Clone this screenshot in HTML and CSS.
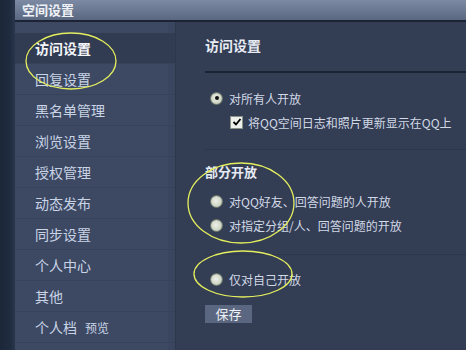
FILE: index.html
```html
<!DOCTYPE html>
<html lang="zh">
<head>
<meta charset="utf-8">
<link rel="stylesheet" href="styles.css">
</head>
<body>
<div class="page">
  <div class="strip"></div>
  <div class="main">
    <div class="titlebar">空间设置</div>
    <div class="body">
      <ul class="sidebar">
        <li class="active">访问设置</li>
        <li>回复设置</li>
        <li>黑名单管理</li>
        <li>浏览设置</li>
        <li>授权管理</li>
        <li>动态发布</li>
        <li>同步设置</li>
        <li>个人中心</li>
        <li>其他</li>
        <li>个人档<span class="sub">预览</span></li>
      </ul>
      <div class="content">
        <div class="head">访问设置</div>
        <div class="section first">
          <label class="opt"><span class="radio checked"></span>对所有人开放</label>
          <label class="opt indent"><span class="check"><svg viewBox="0 0 10 10" width="10" height="10"><path d="M1.5 5 L4 7.5 L8.5 2" fill="none" stroke="#000" stroke-width="1.8"/></svg></span>将QQ空间日志和照片更新显示在QQ上</label>
        </div>
        <div class="section second">
          <div class="subhead">部分开放</div>
          <label class="opt"><span class="radio"></span>对QQ好友、回答问题的人开放</label>
          <label class="opt"><span class="radio"></span>对指定分组/人、回答问题的开放</label>
        </div>
        <div class="section third">
          <label class="opt"><span class="radio"></span>仅对自己开放</label>
          <button class="save">保存</button>
        </div>
      </div>
    </div>
  </div>
  <svg class="marks" width="466" height="350" viewBox="0 0 466 350">
    <ellipse cx="71" cy="61" rx="45" ry="28" fill="none" stroke="#e4ee5e" stroke-width="1.3"/>
    <ellipse cx="241" cy="203" rx="53" ry="40" fill="none" stroke="#e4ee5e" stroke-width="1.3"/>
    <ellipse cx="243" cy="274" rx="49" ry="23" fill="none" stroke="#e4ee5e" stroke-width="1.3"/>
  </svg>
</div>
</body>
</html>
```

FILE: styles.css
```css
html, body {
  margin: 0;
  padding: 0;
  background: #333d54;
}
.page {
  position: relative;
  width: 466px;
  height: 350px;
  overflow: hidden;
  display: flex;
  font-family: "Noto Sans CJK SC", "Liberation Sans", sans-serif;
  font-size: 13px;
}
.strip {
  width: 15px;
  flex: none;
  background: linear-gradient(to right, #1c2739 0, #1f2b3f 10px, #2a364b 15px);
}
.main {
  flex: 1;
  display: flex;
  flex-direction: column;
}
.titlebar {
  height: 20px;
  line-height: 20px;
  padding-left: 7px;
  color: #eef1f6;
  font-weight: bold;
  font-size: 13px;
  background: linear-gradient(to bottom, #7d8aa3 0, #6c7993 10px, #5a6781 20px);
  border-bottom: 2px solid #1b2334;
}
.body {
  flex: 1;
  display: flex;
}
.sidebar {
  list-style: none;
  margin: 0;
  padding: 11px 0 0;
  width: 160px;
  flex: none;
  background: #3d4963;
  border-right: 1px solid #2e384d;
  box-shadow: inset -7px 0 0 #3a465f;
}
.sidebar li {
  height: 30px;
  line-height: 30px;
  padding-left: 20px;
  color: #c9d4e6;
  font-size: 14px;
  border-bottom: 1px solid #36425a;
}
.sidebar li.active {
  background: #313b51;
  color: #f4f6fa;
  font-weight: bold;
}
.sidebar .sub {
  font-size: 12px;
  margin-left: 8px;
}
.content {
  flex: 1;
  background: #333d54;
  padding-left: 29px;
}
.head {
  height: 49px;
  line-height: 46px;
  color: #e6eaf2;
  font-weight: bold;
  font-size: 14px;
  border-bottom: 2px solid #1b2334;
}
.section {
  border-bottom: 1px solid #2d364b;
}
.section.first {
  padding: 13px 0 15px;
}
.section.second {
  padding: 12px 0 17px;
}
.section.third {
  border-bottom: none;
  padding: 12px 0 0;
}
.subhead {
  color: #e6eaf2;
  font-weight: bold;
  font-size: 13px;
  height: 20px;
  line-height: 20px;
  margin-bottom: 7px;
}
.opt {
  display: flex;
  align-items: center;
  height: 24px;
  color: #d2d9e6;
  font-size: 12px;
}
.opt.indent {
  padding-left: 25px;
}
.radio {
  width: 11px;
  height: 11px;
  border-radius: 50%;
  margin-left: 6px;
  margin-right: 7px;
  background: radial-gradient(circle at 45% 45%, #eef0ea 0, #cfd5c5 60%, #aab39c 100%);
  box-shadow: 0 0 0 1px #6e7a6a;
  position: relative;
  flex: none;
}
.radio.checked::after {
  content: "";
  position: absolute;
  left: 3.5px;
  top: 3.5px;
  width: 4px;
  height: 4px;
  border-radius: 50%;
  background: #111;
}
.check {
  width: 11px;
  height: 11px;
  background: #eef0ec;
  border: 1px solid #8b9288;
  margin-right: 5px;
  display: flex;
  align-items: center;
  justify-content: center;
  flex: none;
}
.save {
  display: block;
  margin-top: 14px;
  width: 47px;
  height: 18px;
  padding: 0;
  border: none;
  background: #5b6780;
  color: #eef1f6;
  font-family: "Noto Sans CJK SC", sans-serif;
  font-size: 13px;
  line-height: 18px;
}
.marks {
  position: absolute;
  left: 0;
  top: 0;
  pointer-events: none;
}
```
